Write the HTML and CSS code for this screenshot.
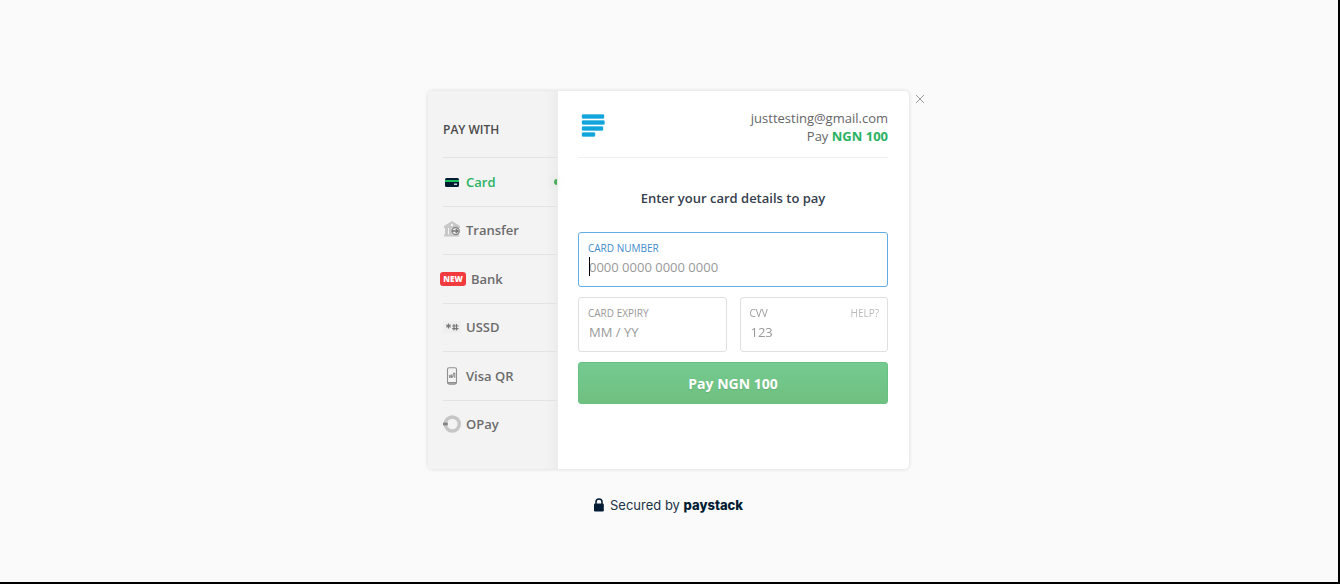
FILE: index.html
```html
<!DOCTYPE html>
<html lang="en">
<head>
<meta charset="utf-8">
<meta name="viewport" content="width=device-width, initial-scale=1">
<title>Paystack Checkout</title>
<link rel="stylesheet" href="styles.css">
</head>
<body class="page">
<main class="checkout">
  <div class="modal">
    <nav class="channels" aria-label="Pay with">
      <h2 class="channels-title">PAY WITH</h2>
      <ul class="channel-list">
        <li class="channel"><button type="button" class="channel-button is-active">
          <svg class="icon" viewBox="0 0 18 18" aria-hidden="true"><rect x="2" y="5" width="14" height="9" rx="1.5" fill="#011b33"/><path d="M2 7h14v2H2z" fill="#19c15a"/><path d="M11 10.600h3v1.200h-3z" fill="#fff"/></svg>
          <span>Card</span></button></li>
        <li class="channel"><button type="button" class="channel-button">
          <svg class="icon" viewBox="0 0 18 18" aria-hidden="true"><path d="M1 5 9 0l8 5v2H1zM2 7h3v7H2zM6 7h2.500v7H6zM14 7h2v7h-2zM1 13.500h15v2H1z" fill="#c8c8c8"/><circle cx="9" cy="4" r="1.200" fill="#f3f3f3"/><circle cx="12.600" cy="10" r="3.600" fill="#efefef" stroke="#8c8c8c" stroke-width="1.500"/><path d="M9 10h6M12.800 8l2 2-2 2" fill="none" stroke="#777" stroke-width="1.300"/></svg>
          <span>Transfer</span></button></li>
        <li class="channel"><button type="button" class="channel-button">
          <span class="badge">NEW</span>
          <span>Bank</span></button></li>
        <li class="channel"><button type="button" class="channel-button">
          <svg class="icon" viewBox="0 0 18 18" aria-hidden="true"><path d="M0 3h18v12H0z" fill="#efefef"/><path d="M5.500 5.500v5M3.300 6.700l4.400 2.600M7.700 6.700 3.300 9.300" stroke="#777" stroke-width="1.100"/><path d="M11 6v6.500M13.500 6v6.500M9.200 8H15.500M9.200 10.600H15.500" stroke="#777" stroke-width="1.200"/></svg>
          <span>USSD</span></button></li>
        <li class="channel"><button type="button" class="channel-button">
          <svg class="icon" viewBox="0 0 18 18" aria-hidden="true"><rect x="4.500" y=".7" width="9" height="16.400" rx="1.600" fill="none" stroke="#909090" stroke-width="1.100"/><path d="M5 15.800h8" stroke="#858585" stroke-width="1.400"/><path d="m6.200 8 .6 3 1.400-3.500.5 3.500M9 11l2-5.500M10 6.500h2M11.800 6v5M9.800 9h2" fill="none" stroke="#858585" stroke-width=".9"/></svg>
          <span>Visa QR</span></button></li>
        <li class="channel"><button type="button" class="channel-button">
          <svg class="icon" viewBox="0 0 18 18" aria-hidden="true"><circle cx="9.300" cy="9" r="7" fill="none" stroke="#c6c6c6" stroke-width="3.400"/><path d="M0 7.600h4.800v2.800H0z" fill="#858585"/></svg>
          <span>OPay</span></button></li>
      </ul>
    </nav>
    <form class="payment">
      <header class="payment-header">
        <svg class="merchant-logo" viewBox="0 0 24 24" role="img" aria-label="Merchant logo"><path fill="#12a5dc" d="M2 .5h20a1 1 0 0 1 1 1v2a1 1 0 0 1-1 1H2a1 1 0 0 1-1-1v-2a1 1 0 0 1 1-1zM2 6.500h20.500a1 1 0 0 1 1 1v2a1 1 0 0 1-1 1H2a1 1 0 0 1-1-1v-2a1 1 0 0 1 1-1zM2 12.500h19a1 1 0 0 1 1 1v2a1 1 0 0 1-1 1H2a1 1 0 0 1-1-1v-2a1 1 0 0 1 1-1zM2 18.500h11a1 1 0 0 1 1 1v2a1 1 0 0 1-1 1H2a1 1 0 0 1-1-1v-2a1 1 0 0 1 1-1z" stroke="#12a5dc" stroke-opacity=".35" stroke-width="1"/></svg>
        <div class="customer">
          <div>justtesting@gmail.com</div>
          <div>Pay <strong class="amount">NGN 100</strong></div>
        </div>
      </header>
      <h1 class="prompt">Enter your card details to pay</h1>
      <div class="fields">
        <div class="field field-wide">
          <label for="number">CARD NUMBER</label>
          <input id="number" type="text" inputmode="numeric" placeholder="0000 0000 0000 0000" autofocus>
          <span class="caret" aria-hidden="true"></span>
        </div>
        <div class="field">
          <label for="expiry">CARD EXPIRY</label>
          <input id="expiry" type="text" placeholder="MM / YY">
        </div>
        <div class="field">
          <div class="label-row"><label for="cvv">CVV</label><a class="help" href="#">HELP?</a></div>
          <input id="cvv" type="text" inputmode="numeric" placeholder="123">
        </div>
      </div>
      <button type="submit" class="pay">Pay NGN 100</button>
    </form>
    <button type="button" class="close" aria-label="Close"><svg viewBox="0 0 10 10" aria-hidden="true"><path d="m1 1 8 8M9 1 1 9" stroke="#999" stroke-width="1"/></svg></button>
  </div>
  <footer class="secured">
    <svg class="lock" viewBox="0 0 10 14" aria-hidden="true"><path d="M2 6V4a3 3 0 0 1 6 0v2" fill="none" stroke="#011b33" stroke-width="1.500"/><rect x="0" y="5.500" width="9.800" height="8" rx="1.200" fill="#011b33"/></svg>
    <span>Secured by <strong class="brand">paystack</strong></span>
  </footer>
</main>
</body>
</html>
```
FILE: styles.css
```css
* { box-sizing: border-box; }

.page {
  margin: 0;
  min-height: 100vh;
  background: #fafafa;
  border-right: 2px solid #000;
  border-bottom: 2px solid #000;
  font-family: "Open Sans", "Noto Sans", sans-serif;
  color: #666;
}

button, input { font-family: inherit; }

.checkout {
  display: flex;
  flex-direction: column;
  align-items: center;
  padding: 91px 21px 60px 20px;
}

.modal {
  position: relative;
  display: grid;
  grid-template-columns: 130px 1fr;
  width: 100%;
  max-width: 481px;
  min-height: 378px;
  border-radius: 5px;
  background: #fff;
  box-shadow: 0 0 4px rgba(0, 0, 0, 0.14);
}

.channels {
  display: flex;
  flex-direction: column;
  padding: 0 1px 21px 15px;
  border-radius: 5px 0 0 5px;
  background: linear-gradient(to right, #f3f3f3 118px, #ececec);
}

.channels-title {
  margin: 0;
  padding-top: 29px;
  height: 66px;
  font-size: 12px;
  line-height: 20px;
  font-weight: 600;
  color: #4a4a4a;
}

.channel-list {
  display: flex;
  flex: 1;
  flex-direction: column;
  margin: 0;
  padding: 0;
  list-style: none;
}

.channel {
  display: flex;
  flex: 1;
  border-top: 1px solid #e3e3e3;
}

.channel-button {
  position: relative;
  display: flex;
  align-items: center;
  gap: 5px;
  width: 100%;
  padding: 0;
  border: 0;
  background: none;
  font-size: 13px;
  font-weight: 600;
  color: #6c6c6c;
}

.channel-button.is-active { color: #29b263; }

.channel-button.is-active::after {
  content: "";
  position: absolute;
  right: 0;
  width: 3px;
  height: 6px;
  border-radius: 3px 0 0 3px;
  background: #4caf60;
  box-shadow: 0 0 9px rgba(76, 175, 96, 0.3);
}

.icon { width: 18px; height: 18px; }

.badge {
  margin-left: -3px;
  width: 26px;
  border-radius: 3px;
  background: #f23b3f;
  color: #fff;
  font-size: 8px;
  line-height: 14px;
  font-weight: 800;
  text-align: center;
}

.payment { padding: 0 21px 20px 20px; }

.payment-header {
  display: flex;
  justify-content: space-between;
  height: 67px;
  padding-top: 18px;
  border-bottom: 1px solid #f0f0f0;
}

.merchant-logo { width: 24px; height: 24px; margin: 5px 3px; }

.customer {
  font-size: 13px;
  line-height: 18px;
  text-align: right;
}

.amount { font-weight: 700; color: #29b263; }

.prompt {
  margin: 30px 0 24px;
  font-size: 13px;
  line-height: 20px;
  font-weight: 600;
  text-align: center;
  color: #36404d;
}

.fields {
  display: grid;
  grid-template-columns: 1fr 1fr;
  gap: 10px 13px;
}

.field {
  position: relative;
  min-width: 0;
  height: 55px;
  padding: 7px 8px 0 9px;
  border: 1px solid #e0e0e0;
  border-radius: 3px;
  background: #fff;
  font-size: 10px;
  line-height: 16px;
  color: #999;
}

.field label { display: block; }

.field-wide { grid-column: 1 / -1; border-color: #64ace4; }
.field-wide label { color: #428bca; }

.field input {
  display: block;
  width: 100%;
  height: 22px;
  padding: 0 1px;
  border: 0;
  outline: 0;
  background: none;
  font-size: 13px;
  caret-color: transparent;
  color: #444;
}

.field input::placeholder { color: #999; opacity: 1; }

.caret {
  position: absolute;
  left: 10px;
  top: 24px;
  width: 1px;
  height: 19px;
  background: #000;
}

.label-row { display: flex; justify-content: space-between; }
.help { color: #bbb; text-decoration: none; }

.pay {
  width: 100%;
  height: 42px;
  margin-top: 10px;
  border: 1px solid #66c183;
  border-radius: 3px;
  background: linear-gradient(#74ca90, #70c080);
  color: #fff;
  font-size: 14px;
  font-weight: 700;
  text-shadow: 0 1px 1px rgba(0, 0, 0, 0.1);
}

.close {
  position: absolute;
  top: 3px;
  right: -16px;
  width: 10px;
  height: 10px;
  padding: 0;
  border: 0;
  background: none;
}

.close svg { display: block; }

.secured {
  display: flex;
  align-items: center;
  gap: 6px;
  margin-top: 26px;
  font-family: Inter, Roboto, sans-serif;
  font-size: 13px;
  line-height: 20px;
  color: #1c3348;
}

.lock { width: 10px; height: 14px; }
.brand { font-weight: 800; color: #011b33; }
```
